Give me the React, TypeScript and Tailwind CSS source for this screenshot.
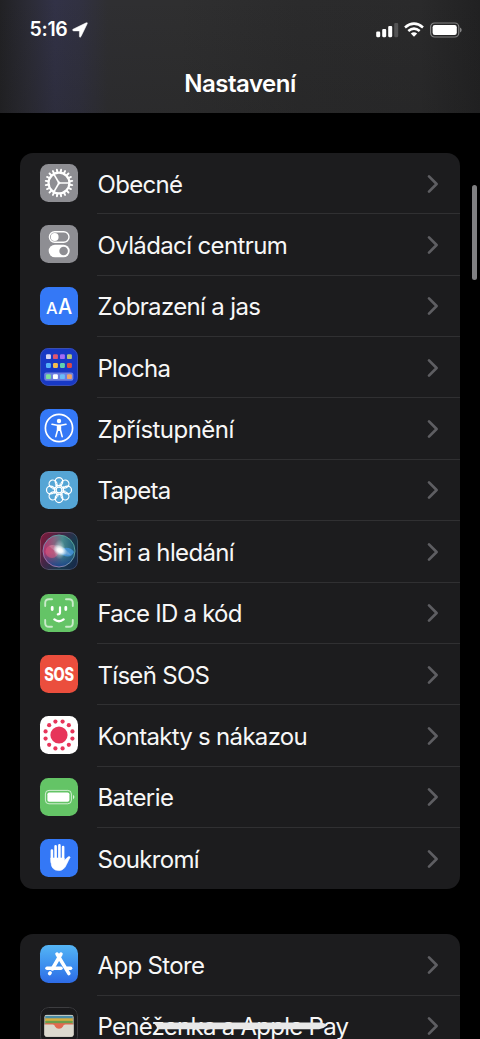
import type { ReactNode } from "react";

type Item = {
  label: string;
  spacing: string;
  tile: string;
  icon: ReactNode;
};

function polar(r: number, deg: number) {
  const a = (deg * Math.PI) / 180;
  return { x: 19 + r * Math.cos(a), y: 19 + r * Math.sin(a) };
}

function GearIcon() {
  return (
    <g stroke="#fff" fill="none">
      {Array.from({ length: 20 }, (_, i) => {
        const a = polar(11, i * 18 + 9);
        const b = polar(13.4, i * 18 + 9);
        return <line key={i} x1={a.x} y1={a.y} x2={b.x} y2={b.y} strokeWidth="1.9" strokeLinecap="round" />;
      })}
      <circle cx="19" cy="19" r="10.4" strokeWidth="2.2" />
      {[0, 120, 240].map((deg) => {
        const p = polar(10, deg);
        return <line key={deg} x1="19" y1="19" x2={p.x} y2={p.y} strokeWidth="1.6" />;
      })}
      <circle cx="19" cy="19" r="1.4" fill="#fff" stroke="none" />
    </g>
  );
}

function TogglesIcon() {
  return (
    <g>
      <rect x="9.4" y="6.7" width="19.6" height="10.6" rx="5.3" fill="none" stroke="#fff" strokeWidth="1.4" />
      <circle cx="14.7" cy="12" r="3.9" fill="#fff" />
      <rect x="8.7" y="19.7" width="21" height="12.6" rx="6.3" fill="#fff" />
      <circle cx="23.6" cy="26" r="4.3" fill="#8e8e93" />
    </g>
  );
}

function TextSizeIcon() {
  return (
    <g fill="#fff" fontFamily="Inter, sans-serif" fontWeight="500">
      <text x="6" y="26.6" fontSize="15.8" textLength="11.6" lengthAdjust="spacingAndGlyphs">A</text>
      <text x="18" y="26.6" fontSize="21.4" textLength="14.2" lengthAdjust="spacingAndGlyphs">A</text>
    </g>
  );
}

const apps = [
  ["#d5d5f5", "#e0566f", "#a56bf5", "#b5c477"],
  ["#55b3fa", "#f5bd4d", "#62cfae", "#e04a45"],
  ["#7fe09a", "#ffffff", "#6bbcf7", "#eea268"],
];

function HomeScreenIcon() {
  return (
    <g>
      <rect x="0.5" y="0.5" width="37" height="37" rx="8" fill="none" stroke="#3a4fb0" />
      <rect x="4.2" y="24.4" width="29.2" height="8.4" rx="2.2" fill="#6c7fe0" />
      {apps.map((row, r) =>
        row.map((c, i) => (
          <rect key={`${r}${i}`} x={6 + i * 7} y={[6.2, 15, 26.2][r]} width="4.9" height="4.9" rx="1.2" fill={c} />
        ))
      )}
    </g>
  );
}

function AccessibilityIcon() {
  return (
    <g>
      <circle cx="19" cy="19" r="13.6" fill="none" stroke="#fff" strokeWidth="1.7" />
      <circle cx="19" cy="12" r="2.2" fill="#fff" />
      <path
        d="M12 15.2 L17.2 16.3 H20.8 L26 15.2 M17.6 16.5 V21 L15.8 27.6 M20.4 16.5 V21 L22.2 27.6"
        fill="none"
        stroke="#fff"
        strokeWidth="1.6"
        strokeLinecap="round"
        strokeLinejoin="round"
      />
      <path d="M17 16 H21 V22 H17 Z" fill="#fff" />
    </g>
  );
}

function FlowerIcon() {
  return (
    <g fill="none" stroke="#fff" strokeWidth="1.25">
      {Array.from({ length: 8 }, (_, i) => (
        <ellipse key={i} cx="19" cy="10.6" rx="3.8" ry="4.1" transform={`rotate(${i * 45} 19 19)`} />
      ))}
      {Array.from({ length: 8 }, (_, i) => (
        <path key={i} d="M19 16.2 L17.4 12.6" strokeWidth="0.9" transform={`rotate(${i * 45 + 22.5} 19 19)`} />
      ))}
      <circle cx="19" cy="19" r="2.9" />
    </g>
  );
}

function SiriIcon() {
  return (
    <g>
      <defs>
        <linearGradient id="siriBg" x1="0" y1="0.2" x2="1" y2="0.8">
          <stop offset="0" stopColor="#791a3b" />
          <stop offset="0.4" stopColor="#3c2848" />
          <stop offset="0.7" stopColor="#173a4d" />
          <stop offset="1" stopColor="#17294a" />
        </linearGradient>
        <linearGradient id="siriOrb" x1="0" y1="0.5" x2="1" y2="0.5">
          <stop offset="0" stopColor="#b4316c" />
          <stop offset="0.35" stopColor="#86627f" />
          <stop offset="0.6" stopColor="#4b898e" />
          <stop offset="1" stopColor="#1c5b78" />
        </linearGradient>
        <linearGradient id="siriLow" x1="0" y1="0" x2="0" y2="1">
          <stop offset="0.55" stopColor="#173b78" stopOpacity="0" />
          <stop offset="1" stopColor="#1c478c" />
        </linearGradient>
        <linearGradient id="siriRing" x1="0" y1="1" x2="1" y2="0">
          <stop offset="0" stopColor="#ab5fa6" />
          <stop offset="0.5" stopColor="#6d95ad" />
          <stop offset="1" stopColor="#4cab8b" />
        </linearGradient>
        <radialGradient id="siriGlow">
          <stop offset="0" stopColor="#fff" />
          <stop offset="0.35" stopColor="#fff" stopOpacity="0.9" />
          <stop offset="1" stopColor="#d9f4ff" stopOpacity="0" />
        </radialGradient>
      </defs>
      <rect width="38" height="38" rx="8.5" fill="url(#siriBg)" />
      <rect x="0.5" y="0.5" width="37" height="37" rx="8" fill="none" stroke="#fff" strokeOpacity="0.16" />
      <circle cx="19" cy="19" r="16" fill="url(#siriOrb)" />
      <circle cx="19" cy="19" r="16" fill="url(#siriLow)" stroke="url(#siriRing)" strokeWidth="1" />
      <ellipse cx="12" cy="19.5" rx="6.5" ry="6.5" fill="#e2557f" fillOpacity="0.55" />
      <path d="M18 20 C23 14 31 15 34 20 C31 27 24 25 18 20Z" fill="#4a9be8" fillOpacity="0.75" />
      <path d="M9 14 C15 11 22 13 31 23 C24 23 14 20 9 14Z" fill="#d7d9de" fillOpacity="0.25" />
      <ellipse cx="20" cy="18.4" rx="7.5" ry="5" fill="url(#siriGlow)" transform="rotate(25 20 18.4)" />
      <ellipse cx="19.5" cy="17.5" rx="6" ry="10" fill="url(#siriGlow)" fillOpacity="0.5" />
    </g>
  );
}

function FaceIcon() {
  return (
    <g fill="none" stroke="#fff" strokeLinecap="round">
      <path
        d="M5.2 12 V9 Q5.2 5.2 9 5.2 H12 M26 5.2 H29 Q32.8 5.2 32.8 9 V12 M32.8 26 V29 Q32.8 32.8 29 32.8 H26 M12 32.8 H9 Q5.2 32.8 5.2 29 V26"
        strokeWidth="1.9"
        strokeOpacity="0.65"
      />
      <path d="M12.2 13.4 V15.6 M25.8 13.4 V15.6" strokeWidth="2.8" />
      <path d="M20 13.4 V18.2 Q20 20.4 17.8 20.4" strokeWidth="2.2" />
      <path d="M14.4 25.4 Q19 29 23.6 25.4" strokeWidth="2.4" />
    </g>
  );
}

function SosIcon() {
  return (
    <text
      x="19"
      y="25.8"
      transform="translate(19 0) scale(0.78 1) translate(-19 0)"
      textAnchor="middle"
      fontSize="18.6"
      fontWeight="800"
      fontFamily="Inter, sans-serif"
      fill="#fff"
      letterSpacing="-0.3"
    >
      SOS
    </text>
  );
}

function ExposureIcon() {
  return (
    <g fill="#e7355a">
      <circle cx="19" cy="19" r="8.6" />
      {Array.from({ length: 12 }, (_, i) => {
        const p = polar(13.9, i * 30 + 15);
        return <circle key={i} cx={p.x} cy={p.y} r="2.1" />;
      })}
    </g>
  );
}

function BatteryTileIcon() {
  return (
    <g>
      <rect x="5.4" y="12.4" width="26" height="13.4" rx="3.6" fill="none" stroke="#fff" strokeOpacity="0.7" strokeWidth="1" />
      <rect x="7.4" y="14.4" width="22" height="9.4" rx="1.8" fill="#fff" />
      <path d="M33 17 Q34.4 17.6 34.4 19.1 Q34.4 20.6 33 21.2 Z" fill="#fff" fillOpacity="0.75" />
    </g>
  );
}

function HandIcon() {
  return (
    <g fill="#fff" stroke="#fff" strokeLinecap="round" strokeLinejoin="round">
      <path d="M11.9 11.6 V23 M15.6 7.4 V21 M19.4 6.4 V21 M23.1 8 V21" strokeWidth="2.6" fill="none" />
      <path d="M11 19 H24.2 V21.6 L27.6 18.2 Q29.3 16.8 30.2 18.2 Q28.6 21 26.5 25.5 Q24 31.6 18.8 31.6 Q11 31.6 11 23 Z" strokeWidth="0.6" />
    </g>
  );
}

function StoreIcon() {
  return (
    <g fill="none" stroke="#fff" strokeWidth="3.5" strokeLinecap="round">
      <path d="M21 9 L12.3 24" />
      <path d="M17 9 L28.9 28.6" />
      <path d="M10.2 27.8 L9.6 28.6" />
      <path d="M7 23.2 H21" />
      <path d="M27 23.2 H30.6" />
    </g>
  );
}

function WalletIcon() {
  return (
    <g>
      <rect x="0.5" y="0.5" width="37" height="37" rx="8" fill="#1a1a1c" stroke="#3d3d40" />
      <clipPath id="walletClip">
        <rect x="4.4" y="7.8" width="29.2" height="22" rx="2.4" />
      </clipPath>
      <g clipPath="url(#walletClip)">
        <rect x="4" y="7.5" width="30" height="23" fill="#d9d6ca" />
        <rect x="5.2" y="8.8" width="27.6" height="4" fill="#4b8da6" />
        <rect x="5.2" y="11.3" width="27.6" height="3.5" fill="#d6ad3d" />
        <rect x="5.2" y="13.8" width="27.6" height="4" fill="#6b9d4c" />
        <rect x="5.2" y="16.2" width="27.6" height="6" fill="#e2694f" />
        <path d="M4 17.6 H12.6 C14 17.6 14.4 18.4 15 19.4 Q16.4 21.7 19 21.7 Q21.6 21.7 23 19.4 C23.6 18.4 24 17.6 25.4 17.6 H34 V31 H4 Z" fill="#dcd9ce" />
      </g>
    </g>
  );
}

const general: Item[] = [
  { label: "Obecné", spacing: "tracking-[-0.7px]", tile: "bg-[#8e8e93]", icon: <GearIcon /> },
  { label: "Ovládací centrum", spacing: "tracking-[-0.63px]", tile: "bg-[#8e8e93]", icon: <TogglesIcon /> },
  { label: "Zobrazení a jas", spacing: "tracking-[-0.65px]", tile: "bg-[#3478f6]", icon: <TextSizeIcon /> },
  { label: "Plocha", spacing: "tracking-[-0.7px]", tile: "bg-[#1839c5]", icon: <HomeScreenIcon /> },
  { label: "Zpřístupnění", spacing: "tracking-[-0.53px]", tile: "bg-[#3478f6]", icon: <AccessibilityIcon /> },
  { label: "Tapeta", spacing: "tracking-[-0.7px]", tile: "bg-[#55a5d5]", icon: <FlowerIcon /> },
  { label: "Siri a hledání", spacing: "tracking-[-0.65px]", tile: "bg-[#2b2440]", icon: <SiriIcon /> },
  { label: "Face ID a kód", spacing: "tracking-[-0.75px]", tile: "bg-[#64c466]", icon: <FaceIcon /> },
  { label: "Tíseň SOS", spacing: "tracking-[-0.7px]", tile: "bg-[#eb4e3d]", icon: <SosIcon /> },
  { label: "Kontakty s nákazou", spacing: "tracking-[-0.7px]", tile: "bg-white", icon: <ExposureIcon /> },
  { label: "Baterie", spacing: "tracking-[-0.6px]", tile: "bg-[#64c466]", icon: <BatteryTileIcon /> },
  { label: "Soukromí", spacing: "tracking-[-0.7px]", tile: "bg-[#3478f6]", icon: <HandIcon /> },
];

const store: Item[] = [
  { label: "App Store", spacing: "tracking-[-0.65px]", tile: "bg-linear-to-b from-[#55b5f5] to-[#2e6be6]", icon: <StoreIcon /> },
  { label: "Peněženka a Apple Pay", spacing: "tracking-[-0.73px]", tile: "bg-[#1a1a1c]", icon: <WalletIcon /> },
];

function Row({ item, last }: { item: Item; last: boolean }) {
  return (
    <li className="flex h-[61.37px] items-center pl-[20.4px]">
      <div className={`mb-[1.4px] size-[38px] shrink-0 overflow-hidden rounded-[8.5px] ${item.tile}`}>
        <svg viewBox="0 0 38 38" className="block size-full">
          {item.icon}
        </svg>
      </div>
      <div
        className={`ml-[19.1px] flex h-full flex-1 items-center justify-between border-b pr-[21.5px] ${
          last ? "border-transparent" : "border-[#303032]"
        }`}
      >
        <span className={`pt-[3px] text-[24px] leading-none whitespace-nowrap text-[#f7f7f7] ${item.spacing}`}>
          {item.label}
        </span>
        <svg viewBox="0 0 12 20" className="mt-[1px] h-5 w-3" fill="none" stroke="#5e5e62" strokeWidth="2.7" strokeLinecap="round" strokeLinejoin="round">
          <path d="M2 2.4 L9.6 10 L2 17.6" />
        </svg>
      </div>
    </li>
  );
}

function Group({ items }: { items: Item[] }) {
  return (
    <ul className="mx-5 overflow-hidden rounded-[13px] bg-[#1c1c1e]">
      {items.map((item, i) => (
        <Row key={item.label} item={item} last={i === items.length - 1} />
      ))}
    </ul>
  );
}

function StatusBar() {
  return (
    <div className="flex h-[59px] items-center justify-between pr-[18px] pl-[29.5px]">
      <div className="flex items-center gap-[4px]">
        <span className="text-[19.5px] leading-none font-semibold tracking-[-0.3px]">5:16</span>
        <svg viewBox="0 0 16 16" className="size-[16px]" fill="#fff">
          <path d="M1 7.2 L14.2 0.8 Q15.8 0.2 15.2 1.8 L9 14.6 Q7.8 16.2 7.4 14.4 V8.9 H1.6 Q-0.2 8.4 1 7.2 Z" stroke="#fff" strokeWidth="0.5" />
        </svg>
      </div>
      <div className="flex items-center gap-[6px]">
        <svg viewBox="0 0 23 16" className="-mr-[1px] h-[16px] w-[23px]" fill="#fff">
          <rect x="0.2" y="9.6" width="4" height="5.6" rx="1.1" />
          <rect x="6.2" y="7" width="4" height="8.2" rx="1.1" />
          <rect x="12.2" y="4" width="4" height="11.2" rx="1.1" />
          <rect x="18.2" y="1" width="4" height="14.2" rx="1.1" fillOpacity="0.2" />
        </svg>
        <svg viewBox="0 0 20 15" className="h-[15px] w-[20px]" fill="none" stroke="#fff" strokeWidth="2.6">
          <path d="M1 5.4 Q10 -2.2 19 5.4" />
          <path d="M4.3 9 Q10 4.2 15.7 9" />
          <path d="M10 14.8 L6.8 11.6 Q10 9 13.2 11.6 Z" fill="#fff" stroke="none" />
        </svg>
        <svg viewBox="0 0 32 16" className="h-[16px] w-[32px]">
          <rect x="0.6" y="1" width="28.2" height="14" rx="4" fill="none" stroke="#fff" strokeOpacity="0.42" strokeWidth="1.2" />
          <rect x="2.6" y="3" width="24.2" height="10" rx="2.2" fill="#fff" />
          <path d="M30 5.6 Q31.7 6.4 31.7 8 Q31.7 9.6 30 10.4 Z" fill="#fff" fillOpacity="0.45" />
        </svg>
      </div>
    </div>
  );
}

export default function App() {
  return (
    <div className="relative h-[1039px] w-[480px] overflow-hidden bg-black font-['Inter',sans-serif] text-white">
      <header className="h-[113px] bg-[linear-gradient(180deg,rgba(70,70,130,0.0),rgba(30,30,30,0.25)),linear-gradient(90deg,#212124_0px,#2b2b35_28px,#323247_55px,#313141_80px,#2f2f32_108px,#2f2f30_180px,#2b2b2c_300px,#2a2a2b_420px,#212122_480px)]">
        <StatusBar />
        <h1 className="pt-[12px] text-center text-[24px] leading-[26px] font-semibold tracking-[-0.5px]">
          Nastavení
        </h1>
      </header>
      <main className="flex flex-col gap-[45px] pt-[40px]">
        <Group items={general} />
        <Group items={store} />
      </main>
      {/* scrollbar */}
      <div className="absolute top-[185px] right-[3.5px] h-[95px] w-[4.5px] rounded-full bg-[#808082]" />
      {/* home indicator */}
      <svg viewBox="0 0 175 8" className="absolute top-[1021.5px] left-[153px] h-[8px] w-[175px]">
        <path d="M0.3 0.5 H168 Q172 1.2 174.3 3.6 Q171 6.6 166 7.2 H6 Q3.6 6.6 3.2 4 Z" fill="#e8e8e8" />
      </svg>
    </div>
  );
}
